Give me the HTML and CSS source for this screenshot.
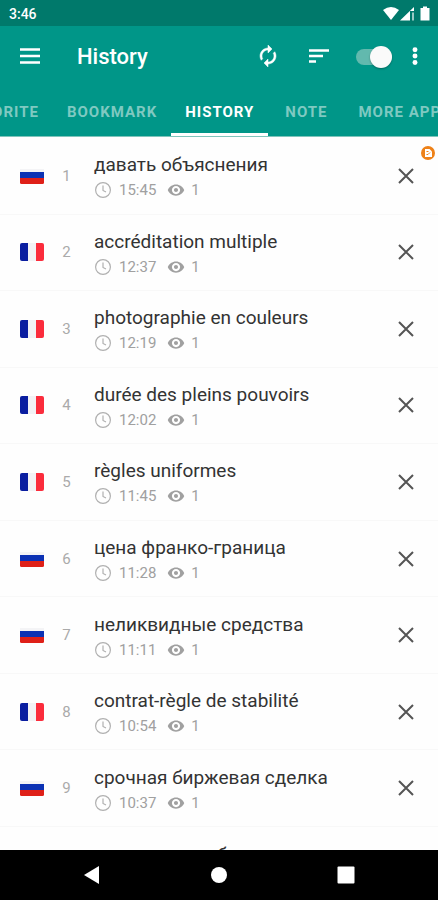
FILE: index.html
```html
<!DOCTYPE html>
<html lang="en">
<head>
<meta charset="utf-8">
<meta name="viewport" content="width=device-width, initial-scale=1">
<title>History</title>
<link rel="stylesheet" href="styles.css">
</head>
<body>
<svg class="sprite" aria-hidden="true">
  <symbol id="clock" viewBox="0 0 18 18"><circle cx="9" cy="9" r="7.4" fill="none" stroke="currentColor" stroke-width="1.2"/><path d="M9 4.5V9.5L12 11" fill="none" stroke="currentColor" stroke-width="1.2"/></symbol>
  <symbol id="eye" viewBox="0 0 24 24"><path fill="currentColor" d="M12 4.5C7 4.5 2.73 7.61 1 12c1.73 4.39 6 7.5 11 7.5s9.27-3.11 11-7.5c-1.73-4.39-6-7.5-11-7.5zM12 17.500c-3 0-5.500-2.500-5.500-5.500s2.500-5.500 5.500-5.500 5.500 2.500 5.500 5.500-2.500 5.500-5.500 5.500zm0-8.200c-1.500 0-2.700 1.200-2.700 2.700s1.200 2.700 2.700 2.700 2.700-1.200 2.700-2.700-1.200-2.700-2.700-2.700z"/></symbol>
  <symbol id="close" viewBox="0 0 24 24"><path d="M5 5L19 19M19 5L5 19" stroke="currentColor" stroke-width="2" fill="none"/></symbol>
  <symbol id="ru" viewBox="0 0 26 18"><path fill="#f4f4f6" d="M1 2h24v3H1z"/><path fill="#0c32b4" d="M1 5h24v7H1z"/><path fill="#df2018" d="M1 11h24v4.500q0 1.500-1.500 1.500h-21Q1 17 1 15.500z"/></symbol>
  <symbol id="fr" viewBox="0 0 26 18"><rect x="1" width="24" height="18" rx="2" fill="#f2f2f5"/><path fill="#0a1ea0" d="M9 0H3Q1 0 1 2v14q0 2 2 2h6z"/><path fill="#fb2c3c" d="M17 0h6q2 0 2 2v14q0 2-2 2h-6z"/></symbol>
</svg>
<div class="screen">
  <div class="status">
    <span class="time">3:46</span>
    <svg class="signals" viewBox="0 0 50 18" aria-hidden="true">
      <path fill="#fff" d="M1 5Q9-1 17 5L9 15z"/>
      <path fill="#fff" d="M18 15.500L32 2v4h-4v9.500z"/><path fill="#fff" d="M30 7.500H32v8h-2z" opacity=".6"/>
      <path fill="#fff" d="M41 1.500h4V3h2.500v12.500h-9V3H41z"/>
    </svg>
  </div>
  <header class="bar">
    <button class="icon menu" aria-label="Menu"><svg viewBox="0 0 24 24"><path d="M2 4.500h20M2 11h20M2 17.500h20" stroke="#fff" stroke-width="2.300"/></svg></button>
    <h1>History</h1>
    <button class="icon" aria-label="Refresh"><svg viewBox="0 0 24 24"><path fill="#fff" stroke="#fff" stroke-width=".5" d="M12 5v3l4-4-4-4v3c-4.420 0-8 3.580-8 8 0 1.570.46 3.030 1.240 4.260L6.700 13.800c-.45-.83-.7-1.790-.7-2.800 0-3.310 2.690-6 6-6zm6.760 1.740L17.300 8.200c.44.84.7 1.790.7 2.800 0 3.310-2.690 6-6 6v-3l-4 4 4 4v-3c4.420 0 8-3.580 8-8 0-1.570-.46-3.030-1.240-4.260z"/></svg></button>
    <button class="icon sort" aria-label="Sort"><svg viewBox="0 0 24 24"><path d="M2 5.500h20M2 11h14M2 16.500h7" stroke="#fff" stroke-width="2.400"/></svg></button>
    <input class="switch" type="checkbox" checked aria-label="Enable history">
    <button class="icon more" aria-label="More options"><svg viewBox="0 0 24 24"><g fill="#fff"><circle cx="12" cy="4" r="2.700"/><circle cx="12" cy="11" r="2.700"/><circle cx="12" cy="18" r="2.700"/></g></svg></button>
  </header>
  <nav class="tabs">
    <a href="#favorite">FAVORITE</a>
    <a href="#bookmark">BOOKMARK</a>
    <a href="#history" class="active" aria-current="page">HISTORY</a>
    <a href="#note">NOTE</a>
    <a href="#more">MORE APPS</a>
  </nav>
  <main>
    <button class="badge" aria-label="Ad options"><svg viewBox="0 0 16 16"><circle cx="8" cy="8" r="7" fill="#ee8118"/><path fill="#fff" d="M5 4h4.500L12 6.500V12H5z"/><path d="M6.500 9.500l1.500 0L10 7.500M6.500 6.500h2" stroke="#ee8118" fill="none"/></svg></button>
    <ol class="list">
      <li><svg class="flag"><use href="#ru"/></svg><span class="num">1</span><div class="text"><h2>давать объяснения</h2><p><svg class="clock"><use href="#clock"/></svg><time>15:45</time><svg class="eye"><use href="#eye"/></svg><span>1</span></p></div><button class="remove" aria-label="Remove"><svg><use href="#close"/></svg></button></li>
      <li><svg class="flag"><use href="#fr"/></svg><span class="num">2</span><div class="text"><h2>accréditation multiple</h2><p><svg class="clock"><use href="#clock"/></svg><time>12:37</time><svg class="eye"><use href="#eye"/></svg><span>1</span></p></div><button class="remove" aria-label="Remove"><svg><use href="#close"/></svg></button></li>
      <li><svg class="flag"><use href="#fr"/></svg><span class="num">3</span><div class="text"><h2>photographie en couleurs</h2><p><svg class="clock"><use href="#clock"/></svg><time>12:19</time><svg class="eye"><use href="#eye"/></svg><span>1</span></p></div><button class="remove" aria-label="Remove"><svg><use href="#close"/></svg></button></li>
      <li><svg class="flag"><use href="#fr"/></svg><span class="num">4</span><div class="text"><h2>durée des pleins pouvoirs</h2><p><svg class="clock"><use href="#clock"/></svg><time>12:02</time><svg class="eye"><use href="#eye"/></svg><span>1</span></p></div><button class="remove" aria-label="Remove"><svg><use href="#close"/></svg></button></li>
      <li><svg class="flag"><use href="#fr"/></svg><span class="num">5</span><div class="text"><h2>règles uniformes</h2><p><svg class="clock"><use href="#clock"/></svg><time>11:45</time><svg class="eye"><use href="#eye"/></svg><span>1</span></p></div><button class="remove" aria-label="Remove"><svg><use href="#close"/></svg></button></li>
      <li><svg class="flag"><use href="#ru"/></svg><span class="num">6</span><div class="text"><h2>цена франко-граница</h2><p><svg class="clock"><use href="#clock"/></svg><time>11:28</time><svg class="eye"><use href="#eye"/></svg><span>1</span></p></div><button class="remove" aria-label="Remove"><svg><use href="#close"/></svg></button></li>
      <li><svg class="flag"><use href="#ru"/></svg><span class="num">7</span><div class="text"><h2>неликвидные средства</h2><p><svg class="clock"><use href="#clock"/></svg><time>11:11</time><svg class="eye"><use href="#eye"/></svg><span>1</span></p></div><button class="remove" aria-label="Remove"><svg><use href="#close"/></svg></button></li>
      <li><svg class="flag"><use href="#fr"/></svg><span class="num">8</span><div class="text"><h2>contrat-règle de stabilité</h2><p><svg class="clock"><use href="#clock"/></svg><time>10:54</time><svg class="eye"><use href="#eye"/></svg><span>1</span></p></div><button class="remove" aria-label="Remove"><svg><use href="#close"/></svg></button></li>
      <li><svg class="flag"><use href="#ru"/></svg><span class="num">9</span><div class="text"><h2>срочная биржевая сделка</h2><p><svg class="clock"><use href="#clock"/></svg><time>10:37</time><svg class="eye"><use href="#eye"/></svg><span>1</span></p></div><button class="remove" aria-label="Remove"><svg><use href="#close"/></svg></button></li>
      <li class="next"><div class="text"><h2>переговоры об</h2></div></li>
    </ol>
  </main>
  <footer class="system">
    <button aria-label="Back"><svg viewBox="0 0 20 20"><path fill="#fff" d="M2 10L17 1v18z"/></svg></button>
    <button aria-label="Home"><svg viewBox="0 0 20 20"><circle cx="10" cy="10" r="8" fill="#fff"/></svg></button>
    <button aria-label="Recent apps"><svg viewBox="0 0 20 20"><rect x="1.500" y="1.500" width="17" height="17" rx="1" fill="#fff"/></svg></button>
  </footer>
</div>
</body>
</html>
```
FILE: styles.css
```css
* { box-sizing: border-box; }
body { margin: 0; font-family: Roboto, "Noto Sans", sans-serif; background: #fefefe; }
h1, h2, p, ol { margin: 0; padding: 0; font-weight: 400; }
svg { display: block; }
button { border: 0; padding: 0; background: none; color: inherit; cursor: pointer; }
.sprite { position: absolute; width: 0; height: 0; }

.screen { display: flex; flex-direction: column; height: 100vh; overflow: hidden; }

.status { display: flex; justify-content: space-between; align-items: center; height: 26px; padding: 2px 6px 0 9px; background: #00796b; color: #fff; }
.time { font-size: 14px; font-weight: 500; }
.signals { width: 50px; height: 18px; }

.bar { display: flex; align-items: center; height: 61px; padding: 0 11px 0 18px; background: #009688; color: #fff; }
.bar h1 { flex: 1; margin-left: 35px; font-size: 22px; font-weight: 500; }
.icon svg { width: 24px; height: 24px; }
.sort { margin-left: 27px; }
.icon.more svg { height: 22px; }
.switch { appearance: none; display: flex; align-items: center; justify-content: flex-end; width: 36px; height: 16px; margin: 0 11px 0 25px; border-radius: 8px; background: #62b9ae; }
.switch::before { content: ""; flex: none; width: 22px; height: 22px; border-radius: 50%; background: #fafafa; box-shadow: 0 1px 2px rgba(0, 0, 0, .3); }

.tabs { display: flex; height: 50px; overflow: hidden; background: #009688; border-bottom: 1px solid #7fc4bb; }
.tabs a { flex: none; display: flex; align-items: center; justify-content: center; min-width: 76px; padding: 4px 14px 0; border-bottom: 3px solid transparent; color: #7fc9c1; font-size: 15px; font-weight: 700; letter-spacing: 1px; text-decoration: none; }
.tabs a:first-child { margin-left: -51px; }
.tabs .active { border-color: #fff; color: #fff; }

main { position: relative; flex: 1; min-height: 0; padding-top: 1px; overflow: hidden; }
.badge { position: absolute; top: 8px; right: 2px; }
.badge svg { width: 16px; height: 16px; }
.list { display: grid; grid-template-rows: repeat(9, minmax(76px, 1fr)) 23px; height: 100%; list-style: none; }
.list li { display: flex; align-items: center; min-height: 0; padding: 0 20px 0 19px; border-bottom: 1px solid #f8f8f8; }
.flag { width: 26px; height: 18px; }
.num { width: 43px; text-align: center; color: #aaa; font-size: 15px; }
.text { flex: 1; margin-left: 6px; padding-top: 5px; }
.text h2 { color: #333; font-size: 19px; line-height: 24px; white-space: nowrap; }
.text p { display: flex; align-items: center; height: 26px; color: #a0a0a0; font-size: 15px; }
.clock { width: 18px; height: 18px; color: #b0b0b0; }
.eye { width: 18px; height: 18px; margin: 0 6px 0 11px; }
.text time { margin-left: 7px; }
.remove { color: #555; }
.remove svg { width: 24px; height: 24px; }
.list .next { align-items: flex-start; padding: 11px 20px 0 88px; border: 0; overflow: hidden; }

.system { display: flex; justify-content: space-between; align-items: center; height: 50px; padding: 0 82px; background: #000; }
.system svg { width: 20px; height: 20px; }
```
